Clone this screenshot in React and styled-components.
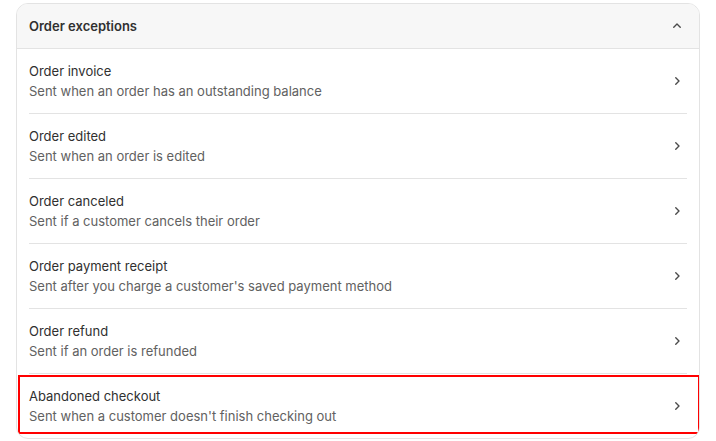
import React from "react";
import styled, { createGlobalStyle } from "styled-components";

const Global = createGlobalStyle`
  html, body { margin: 0; padding: 0; background: #ffffff; }
  body { font-family: Inter, "Noto Sans", "Liberation Sans", sans-serif; -webkit-font-smoothing: antialiased; }
`;

const Page = styled.div`
  padding: 3px 16px 0 16px;
  width: 684px;
`;

const Card = styled.section`
  border: 1px solid #e3e3e3;
  border-radius: 12px;
  overflow: hidden;
  background: #ffffff;
`;

const Header = styled.div`
  height: 44px;
  display: flex;
  align-items: center;
  justify-content: space-between;
  padding: 0 12px;
  background: #f7f7f7;
  border-bottom: 1px solid #e3e3e3;
`;

const Title = styled.h2`
  margin: 0;
  font-size: 13px;
  font-weight: 600;
  color: #303030;
  line-height: 20px;
`;

const IconBox = styled.span`
  width: 20px;
  height: 20px;
  display: flex;
  align-items: center;
  justify-content: center;
  color: #4a4a4a;
  flex: none;
`;

const Row = styled.div`
  position: relative;
  padding: 0 12px;
  cursor: pointer;
`;

const RowInner = styled.div`
  display: flex;
  align-items: center;
  justify-content: space-between;
  padding: 12px 0 12px;
  height: 40px;
  border-top: ${(p) => (p.$first ? "none" : "1px solid #e3e3e3")};
`;

const Texts = styled.div`
  display: flex;
  flex-direction: column;
`;

const RowTitle = styled.span`
  font-size: 13px;
  line-height: 20px;
  color: #303030;
  font-weight: 400;
`;

const RowSub = styled.span`
  font-size: 13px;
  line-height: 20px;
  color: #616161;
`;

const Highlight = styled.div`
  position: absolute;
  left: 1px;
  right: -1px;
  top: 2px;
  bottom: 4px;
  border: 2px solid #ff0000;
  pointer-events: none;
`;

const ChevronUp = () => (
  <svg width="12" height="12" viewBox="0 0 12 12" fill="none">
    <path d="M2.75 7.25L6 4L9.25 7.25" stroke="currentColor" strokeWidth="1.4" strokeLinecap="round" strokeLinejoin="round" />
  </svg>
);

const ChevronRight = () => (
  <svg width="12" height="12" viewBox="0 0 12 12" fill="none">
    <path d="M4.75 2.75L8 6L4.75 9.25" stroke="currentColor" strokeWidth="1.4" strokeLinecap="round" strokeLinejoin="round" />
  </svg>
);

const items = [
  ["Order invoice", "Sent when an order has an outstanding balance"],
  ["Order edited", "Sent when an order is edited"],
  ["Order canceled", "Sent if a customer cancels their order"],
  ["Order payment receipt", "Sent after you charge a customer's saved payment method"],
  ["Order refund", "Sent if an order is refunded"],
  ["Abandoned checkout", "Sent when a customer doesn't finish checking out"],
];

export default function App() {
  return (
    <>
      <Global />
      <Page>
        <Card>
          <Header>
            <Title>Order exceptions</Title>
            <IconBox><ChevronUp /></IconBox>
          </Header>
          {items.map(([t, s], i) => (
            <Row key={t}>
              <RowInner $first={i === 0}>
                <Texts>
                  <RowTitle>{t}</RowTitle>
                  <RowSub>{s}</RowSub>
                </Texts>
                <IconBox><ChevronRight /></IconBox>
              </RowInner>
              {i === items.length - 1 && <Highlight />}
            </Row>
          ))}
        </Card>
      </Page>
    </>
  );
}
